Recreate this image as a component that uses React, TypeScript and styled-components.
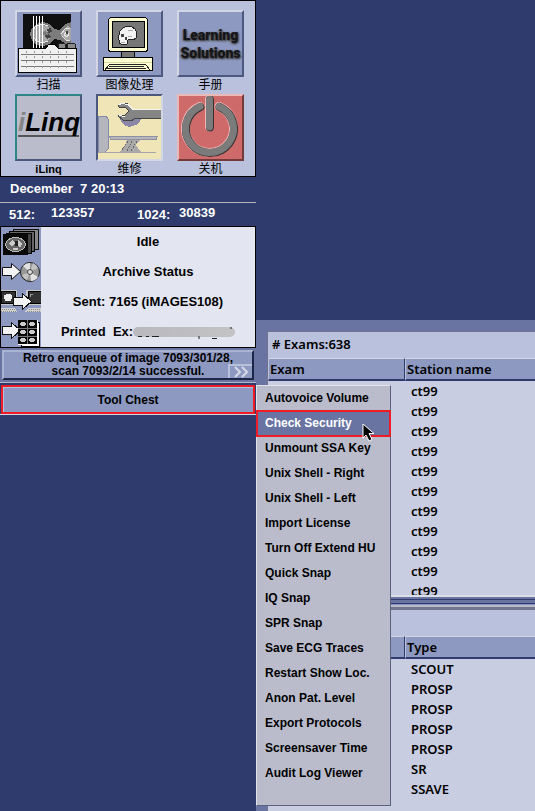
import React from "react";
import styled, { createGlobalStyle } from "styled-components";

const c = {
  navy: "#2e3b6c",
  slate: "#6974a3",
  steel: "#8d99c1",
  pale: "#b9c1dc",
  row: "#c8cde1",
  mist: "#e3e5f1",
  grey: "#babccb",
  light: "#d3d7e4",
  shade: "#4c587f",
  red: "#ee1c25",
};

const ui = `"Liberation Sans", "Noto Sans CJK SC", sans-serif`;
const lucida = `"Noto Sans", "Open Sans", sans-serif`;

const Global = createGlobalStyle`
  * { box-sizing: border-box; }
  body { margin: 0; background: ${c.navy}; font-family: ${ui}; color: #000; }
  button { font: inherit; color: inherit; margin: 0; padding: 0; cursor: default; }
`;

const Page = styled.div`
  display: grid;
  grid-template-columns: 256px minmax(0, 1fr);
  height: 100vh;
  overflow: hidden;
`;

const Sidebar = styled.aside`
  display: flex;
  flex-direction: column;
  font-size: 12px;
  font-weight: 700;
`;

const Launcher = styled.nav`
  display: grid;
  grid-template-columns: repeat(3, 67px);
  grid-template-rows: 84px 82px;
  column-gap: 14px;
  padding: 9px 0 0 14px;
  background: ${c.pale};
  border: 1px solid #000;
`;

const Launch = styled.div`
  display: flex;
  flex-direction: column;
  align-items: center;
`;

const LaunchButton = styled.button<{ $bg?: string; $sunken?: boolean; $edge?: string; $low?: string }>`
  display: block;
  flex: none;
  width: 67px;
  height: 67px;
  background: ${(p) => p.$bg ?? c.steel};
  border: 2px solid;
  border-color: ${(p) => {
    const hi = p.$edge ?? c.light;
    const lo = p.$low ?? c.shade;
    return p.$sunken ? `${lo} ${hi} ${hi} ${lo}` : `${hi} ${lo} ${lo} ${hi}`;
  }};
  svg { display: block; }
`;

const LaunchLabel = styled.span<{ $bold?: boolean }>`
  font-size: ${(p) => (p.$bold ? 11 : 12)}px;
  font-weight: ${(p) => (p.$bold ? 700 : 400)};
  line-height: 16px;
`;

const Wordmark = styled.span`
  display: block;
  font-family: Roboto, "Liberation Sans", sans-serif;
  font-size: 14px;
  font-weight: 900;
  line-height: 18px;
  color: #16161a;
  white-space: nowrap;
  text-shadow: 1px 1px 2px #333, -1px 1px 2px #666;
`;

const Linq = styled.span`
  display: block;
  margin: 0 1px 10px;
  border-bottom: 2px solid #555;
  font-size: 26px;
  font-style: italic;
  font-weight: 700;
  line-height: 26px;
  white-space: nowrap;
  i { color: #858585; }
`;

const DateLine = styled.div`
  height: 26px;
  padding: 0 10px;
  line-height: 24px;
  color: #fff;
  border-bottom: 1px solid #b5b5ba;
  font-size: 13px;
  white-space: pre;
`;

const Space = styled.dl`
  display: grid;
  grid-template-columns: 42px 86px 42px 1fr;
  height: 23px;
  margin: 0;
  padding-left: 9px;
  color: #fff;
  font-size: 13px;
  dt { line-height: 24px; }
  dd { margin: 0; line-height: 20px; }
`;

const Status = styled.section`
  display: grid;
  grid-template-columns: 40px 1fr;
  grid-auto-rows: 30px;
  border: 1px solid #000;
  background: ${c.mist};
`;

const StatusIcon = styled.div`
  background: ${c.steel};
  svg { display: block; }
`;

const StatusText = styled.div`
  display: flex;
  align-items: center;
  justify-content: center;
  font-size: 13px;
  line-height: 14px;
  white-space: pre;
`;

const Redacted = styled.span`
  width: 102px;
  height: 10px;
  border-radius: 5px;
  background: linear-gradient(90deg, #b9b9bd, #c3c3c6);
  svg { display: block; }
`;

const MessageArea = styled.div`
  padding: 2px;
  background: ${c.slate};
`;

const Message = styled.div`
  position: relative;
  height: 30px;
  border: 2px solid;
  border-color: #a9b3d2 #1d2548 #1d2548 #a9b3d2;
  background: ${c.steel};
  text-align: center;
  font-size: 12px;
  line-height: 13px;
`;

const More = styled.button`
  position: absolute;
  right: 0;
  bottom: 0;
  width: 24px;
  height: 14px;
  background: ${c.steel};
  border: 0;
  border-top: 2px solid #b8c0da;
  border-left: 2px solid #b8c0da;
  svg { display: block; }
`;

const Chest = styled.div`
  position: relative;
  height: 33px;
  padding-top: 2px;
  border-top: 1px solid #b5b9c9;
  border-bottom: 1px solid ${c.light};
  background: ${c.navy};
`;

const ChestButton = styled.button`
  && {
    display: block;
    width: 254px;
    height: 29px;
    margin-left: 1px;
    padding: 0;
    border: 2px solid ${c.red};
    background: ${c.steel};
    box-shadow: inset 1px 1px 0 ${c.pale};
    font-size: 12px;
  }
`;

const Menu = styled.div`
  position: absolute;
  z-index: 2;
  left: 100%;
  top: 2px;
  width: 135px;
  padding-bottom: 19px;
  background: ${c.grey};
  border: 1px solid;
  border-color: #e2e2e8 #5a6280 #5a6280 #e2e2e8;
`;

const MenuItem = styled.button<{ $active?: boolean }>`
  && {
    position: relative;
    display: block;
    width: 100%;
    height: 25px;
    padding-left: 8px;
    border: 0;
    text-align: left;
    white-space: nowrap;
    font-size: 12px;
    line-height: 25px;
    color: ${(p) => (p.$active ? "#fff" : "#000")};
    background: ${(p) => (p.$active ? c.slate : "transparent")};
    outline: ${(p) => (p.$active ? `2px solid ${c.red}` : "none")};
    outline-offset: -1px;
  }
`;

const Pointer = styled.svg`
  position: absolute;
  left: 105px;
  top: 12px;
`;

const Browser = styled.main`
  display: grid;
  grid-template-rows: 264px 14px minmax(0, 1fr);
  margin-top: 320px;
  padding: 11px 0 0 11px;
  background: ${c.slate};
  font-family: ${lucida};
  font-size: 13px;
  font-weight: 600;
`;

const Pane = styled.section`
  overflow: hidden;
  min-height: 0;
  background: ${c.row};
  border-left: 1px solid #70758d;
`;

const PaneTitle = styled.div`
  height: 27px;
  padding: 0 4px;
  line-height: 27px;
  background: ${c.pale};
  box-shadow: inset 0 1px 0 #70758d;
`;

const Splitter = styled.div`
  border-top: 2px solid #dcdfea;
  border-bottom: 2px solid #70758d;
  background: linear-gradient(
    ${c.slate} 0 2px, ${c.navy} 2px 3px, ${c.slate} 3px 6px,
    ${c.navy} 6px 7px, #8490bd 7px 8px, #b9bbcb 8px 10px
  );
`;

const Table = styled.table`
  width: 100%;
  table-layout: fixed;
  border-collapse: separate;
  border-spacing: 0;
  col:first-child { width: 137px; }
  th {
    height: 23px;
    padding: 0 1px;
    text-align: left;
    font-weight: 600;
    line-height: 20px;
    background: ${c.steel};
    border-top: 1px solid ${c.light};
    border-left: 1px solid ${c.pale};
    border-bottom: 2px solid ${c.navy};
  }
  th:first-child { border-right: 1px solid ${c.navy}; }
  td {
    height: 20px;
    padding: 0 6px;
    line-height: 20px;
    white-space: nowrap;
  }
`;

function ScanIcon() {
  return (
    <svg width="63" height="63" viewBox="17 12 63 63" shapeRendering="crispEdges" aria-hidden="true">
      <rect x="23" y="14" width="48" height="35" fill="#101010" />
      <path d="M30 34l2-6 4-4 7-2 7 2 4 5 5 1 6-6 6-2v22h-5l-6-4-6-1-4 5-7 2-7-1-4-4z" fill="#7c7c7c" />
      <path d="M33 33l2-5 5-3 7 1 4 4-3 2-4-1-2 3 5 2 3 3-4 3-6 1-5-3zM60 33l4-4 4-3 3 2v12l-4 1-5-4z" fill="#a8a8a8" />
      <path d="M33 36l3 5 6 2 6-2M33 30l3-4 6-2 6 2M61 34l4-5 5-1M62 36l4 4h4M64 34l3-2 2 3-3 2z" stroke="#e6e6e6" fill="none" />
      <path d="M47 29l4-1 1 4-4 1zM44 36l5-2 2 3-4 2zM66 31h2v3h-2z" fill="#444" />
      <path d="M58 48v-4l3-1 4 1 1 5zM67 48v-4l3-1 5 1v4z" fill="#8a8a8a" stroke="#222" />
      <path d="M33 16h1v33h-1zM36 16h1v33h-1zM39 16h1v33h-1zM42 16h1v33h-1z" fill="#fff" />
      <path d="M18.500 48.500h27l3-4h6l4 4h18v24h-58z" fill="#f0f0f0" stroke="#000" />
      <path d="M21 54.500h53M21 60.500h53M21 66.500h53" stroke="#777" />
      <path d="M26.500 51v20M34.500 51v20M42.500 51v20M50.500 51v20M58.500 51v20M66.500 51v20" stroke="#999" strokeDasharray="2 3" />
    </svg>
  );
}

function ImagingIcon() {
  return (
    <svg width="63" height="63" viewBox="98 12 63 63" shapeRendering="crispEdges" aria-hidden="true">
      <rect x="121" y="51" width="13" height="7" fill="#777" stroke="#000" />
      <rect x="108.500" y="17.500" width="39" height="34" rx="3" fill="#fffdd2" stroke="#000" />
      <rect x="112.500" y="21.500" width="32" height="26" rx="1" fill="#777" stroke="#000" />
      <path d="M119 35l1-4 3-3 4-2h4l4 3 2 4-1 5-3 2-3-1-2 1-1 4-4 1-4-2v-3l-1-3z" fill="#f2f2f2" stroke="#222" />
      <path d="M121 34h3v3h-3zM125 37h2v3h-2z" fill="#444" />
      <path d="M121 42h4M128 36h4M128 30h5" stroke="#aaa" />
      <path d="M103.500 57.500h49v13h-49z" fill="#fffdd2" stroke="#000" />
      <path d="M104 62.500h48" stroke="#d8d5a8" />
      <path d="M109.500 64.500h36l5 6M109.500 64.500l-5 6M107 68.500h39M109 66.500h35" stroke="#222" fill="none" />
    </svg>
  );
}

function ServiceIcon() {
  return (
    <svg width="63" height="63" viewBox="98 95 63 63" shapeRendering="crispEdges" aria-hidden="true">
      <path d="M98 115h8l2 3v30l-3 3h-7z" fill="#b5b6bd" stroke="#848ba8" />
      <path d="M98 151.500h58" stroke="#a6a6a6" />
      <path d="M120 118l7 2 7-3h8l-4 6-8 3-5-1-3-3z" fill="#8a86a5" />
      <path d="M109 135.500h48l-1 3h-45z" fill="#b7b7bb" stroke="#8d91a3" />
      <path d="M127 139h13l-4 5 5 7h-22l3-3 3-3z" fill="#aaa" />
      <path d="M128 140l-6 9M132 140l-5 10M137 140l-6 10" stroke="#666" strokeDasharray="2 1" />
      <path d="M118 105l3-3 7 1 5 5h28v9h-25l-5 3-8-1-5-4 1-1h6l4-4-4-4h-6z" fill="#858585" stroke="#444" />
      <path d="M119 103.500l3-1 6 1 5 5h28M119 114.500l6 1" stroke="#f4f4f4" fill="none" />
    </svg>
  );
}

function PowerIcon() {
  return (
    <svg width="63" height="63" viewBox="179 95 63 63" aria-hidden="true">
      <g fill="none" strokeLinecap="round">
        <path d="M200 105.500a24 24 0 1 0 19 0M209.500 98v28" stroke="#efb9b6" strokeWidth="9" />
        <path d="M200.500 106a24 24 0 1 0 19 0M210 98.500v28" stroke="#3a3030" strokeWidth="8" />
        <path d="M200 105.500a24 24 0 1 0 19 0M209.500 98v28" stroke="#7b7b7b" strokeWidth="7" />
      </g>
    </svg>
  );
}

function Arrow({ x, y }: { x: number; y: number }) {
  return (
    <path
      transform={`translate(${x} ${y})`}
      d="M.5 4.500h9v-4l9 8-9 8v-4h-9z"
      fill="#f3f3f3"
      stroke="#111"
    />
  );
}

function FilmStack() {
  return (
    <svg width="40" height="30" viewBox="1 227 40 30" shapeRendering="crispEdges" aria-hidden="true">
      <path d="M13.500 229.500h25v20h-25z" fill="#888" stroke="#111" />
      <path d="M9.500 231.500h25v20h-25z" fill="#666" stroke="#000" />
      <path d="M6.500 233.500h25v20h-25z" fill="#444" stroke="#000" />
      <rect x="3" y="234" width="25" height="21" fill="#080808" />
      <ellipse cx="15.500" cy="244.500" rx="10" ry="7" fill="#666" stroke="#bbb" />
      <path d="M9 243l4-3 2 3-3 4zM18 240l4 4-2 4-3-3zM13 248h5v2h-5z" fill="#ccc" />
      <path d="M15 241h3v5h-3z" fill="#222" />
    </svg>
  );
}

function ArchiveDisc() {
  return (
    <svg width="40" height="30" viewBox="1 257 40 30" aria-hidden="true">
      <circle cx="30" cy="272" r="9.500" fill="#999" stroke="#222" />
      <path d="M30 272l-7-6a9 9 0 0 1 7-3zM30 272l8 5a9 9 0 0 1-7 4z" fill="#e2e2e2" />
      <path d="M30 272l8-4a9 9 0 0 0-5-5zM30 272l-8 3a9 9 0 0 0 5 5z" fill="#c2c2c2" />
      <circle cx="30" cy="272" r="2.500" fill="#ddd" stroke="#444" />
      <Arrow x={2} y={263} />
    </svg>
  );
}

function NetworkTransfer() {
  return (
    <svg width="40" height="30" viewBox="1 287 40 30" shapeRendering="crispEdges" aria-hidden="true">
      <path d="M1 290h16v15H1zM26 290h15v15H26z" fill="#c8c8c8" />
      <path d="M1 291.500h14v12H1zM28.500 291.500H41v12H28.500z" fill="#333" stroke="#000" />
      <path d="M4 295h2v-1h5v1h1v4h-1v2H5v-2H4z" fill="#eee" />
      <path d="M30 294h3M30 294v3" stroke="#999" />
      <path d="M1 308h14l2 4H1zM28 308h13v4H25z" fill="#d2d2d2" />
      <path d="M2 309.500h13M1 311.500h15M29 309.500h12M27 311.500h14" stroke="#888" strokeDasharray="1 1" />
      <Arrow x={13} y={293} />
    </svg>
  );
}

function FilmPrint() {
  return (
    <svg width="40" height="30" viewBox="1 317 40 30" shapeRendering="crispEdges" aria-hidden="true">
      <Arrow x={2} y={322} />
      <path d="M21 322h18v24H21z" fill="#fff" stroke="#000" />
      <path d="M17.500 319.500h20v25h-20z" fill="#fff" />
      <rect x="18" y="320" width="19" height="24" fill="#080808" />
      <path d="M27.500 320v24M18 328.500h19M18 336.500h19" stroke="#777" />
      <g fill="#ccc">
        <ellipse cx="23" cy="324" rx="3" ry="2" /><ellipse cx="32" cy="324" rx="3" ry="2" />
        <ellipse cx="23" cy="332" rx="3" ry="2" /><ellipse cx="32" cy="332" rx="3" ry="2" />
        <ellipse cx="23" cy="340" rx="3" ry="2" /><ellipse cx="32" cy="340" rx="3" ry="2" />
      </g>
    </svg>
  );
}

const menuItems = [
  "Autovoice Volume", "Check Security", "Unmount SSA Key", "Unix Shell - Right",
  "Unix Shell - Left", "Import License", "Turn Off Extend HU", "Quick Snap",
  "IQ Snap", "SPR Snap", "Save ECG Traces", "Restart Show Loc.",
  "Anon Pat. Level", "Export Protocols", "Screensaver Time", "Audit Log Viewer",
];

const stations = Array.from({ length: 11 }, () => "ct99");
const types = ["SCOUT", "PROSP", "PROSP", "PROSP", "PROSP", "SR", "SSAVE"];

function DataTable({ heads, rows }: { heads: [string, string]; rows: string[] }) {
  return (
    <Table>
      <colgroup><col /><col /></colgroup>
      <thead><tr><th scope="col">{heads[0]}</th><th scope="col">{heads[1]}</th></tr></thead>
      <tbody>
        {rows.map((value, i) => (
          <tr key={i}><td /><td>{value}</td></tr>
        ))}
      </tbody>
    </Table>
  );
}

export default function App() {
  return (
    <>
      <Global />
      <Page>
        <Sidebar>
          <Launcher>
            <Launch>
              <LaunchButton aria-labelledby="scan"><ScanIcon /></LaunchButton>
              <LaunchLabel id="scan">扫描</LaunchLabel>
            </Launch>
            <Launch>
              <LaunchButton aria-labelledby="imaging"><ImagingIcon /></LaunchButton>
              <LaunchLabel id="imaging">图像处理</LaunchLabel>
            </Launch>
            <Launch>
              <LaunchButton aria-labelledby="manual"><Wordmark>Learning<br />Solutions</Wordmark></LaunchButton>
              <LaunchLabel id="manual">手册</LaunchLabel>
            </Launch>
            <Launch>
              <LaunchButton aria-labelledby="ilinq" $bg="#babccb" $edge="#2e8587"><Linq><i>i</i>Linq</Linq></LaunchButton>
              <LaunchLabel id="ilinq" $bold>iLinq</LaunchLabel>
            </Launch>
            <Launch>
              <LaunchButton aria-labelledby="service" $bg="#efe5b6" $sunken><ServiceIcon /></LaunchButton>
              <LaunchLabel id="service">维修</LaunchLabel>
            </Launch>
            <Launch>
              <LaunchButton aria-labelledby="shutdown" $bg="#ce6a6a" $edge="#eab9b8" $low="#743a3a"><PowerIcon /></LaunchButton>
              <LaunchLabel id="shutdown">关机</LaunchLabel>
            </Launch>
          </Launcher>
          <DateLine>December  7 20:13</DateLine>
          <Space>
            <dt>512:</dt><dd>123357</dd>
            <dt>1024:</dt><dd>30839</dd>
          </Space>
          <Status>
            <StatusIcon><FilmStack /></StatusIcon><StatusText>Idle</StatusText>
            <StatusIcon><ArchiveDisc /></StatusIcon><StatusText>Archive Status</StatusText>
            <StatusIcon><NetworkTransfer /></StatusIcon><StatusText>Sent: 7165 (iMAGES108)</StatusText>
            <StatusIcon><FilmPrint /></StatusIcon>
            <StatusText>
              {"Printed  Ex:"}
              <Redacted>
                <svg width="102" height="12" viewBox="0 0 102 12" aria-hidden="true">
                  <path d="M5 9.500h4M13 9.500h3M19 9.500h7M66 9v3M79 11.500h5M97 1h2" stroke="#222" fill="none" />
                </svg>
              </Redacted>
            </StatusText>
          </Status>
          <MessageArea>
            <Message>
              Retro enqueue of image 7093/301/28,<br />scan 7093/2/14 successful.
              <More aria-label="More messages">
                <svg width="22" height="12" viewBox="0 0 22 12" aria-hidden="true">
                  <path d="M5 1l5 5-5 5M12 1l5 5-5 5" fill="none" stroke="#d6dae8" strokeWidth="2" />
                </svg>
              </More>
            </Message>
          </MessageArea>
          <Chest>
            <ChestButton aria-haspopup="menu" aria-expanded="true">Tool Chest</ChestButton>
            <Menu role="menu">
              {menuItems.map((label, i) => (
                <MenuItem key={label} role="menuitem" $active={i === 1}>
                  {label}
                  {i === 1 && (
                    <Pointer width="13" height="19" viewBox="0 0 13 19" aria-hidden="true">
                      <path d="M1 1v14l3-3 3 6 3-1.500-3-6h5z" fill="#000" stroke="#fff" />
                    </Pointer>
                  )}
                </MenuItem>
              ))}
            </Menu>
          </Chest>
        </Sidebar>
        <Browser>
          <Pane>
            <PaneTitle># Exams:638</PaneTitle>
            <DataTable heads={["Exam", "Station name"]} rows={stations} />
          </Pane>
          <Splitter />
          <Pane>
            <PaneTitle />
            <DataTable heads={["", "Type"]} rows={types} />
          </Pane>
        </Browser>
      </Page>
    </>
  );
}
